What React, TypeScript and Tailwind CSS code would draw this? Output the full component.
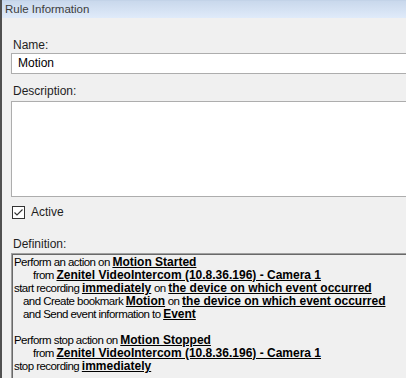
import React from 'react'

const ui = { fontFamily: '"Liberation Sans", Arial, sans-serif' }

function B({ children }: { children: React.ReactNode }) {
  return <span className="font-bold text-[12px] tracking-normal underline underline-offset-[1px]">{children}</span>
}

const lines: React.ReactNode[] = [
  <>Perform an action on <B>Motion Started</B></>,
  <span className="pl-[19px]">from <B>Zenitel VideoIntercom (10.8.36.196) - Camera 1</B></span>,
  <>start recording <B>immediately</B> on <B>the device on which event occurred</B></>,
  <span className="pl-[9px]">and Create bookmark <B>Motion</B> on <B>the device on which event occurred</B></span>,
  <span className="pl-[9px]">and Send event information to <B>Event</B></span>,
  <>&nbsp;</>,
  <>Perform stop action on <B>Motion Stopped</B></>,
  <span className="pl-[19px]">from <B>Zenitel VideoIntercom (10.8.36.196) - Camera 1</B></span>,
  <>stop recording <B>immediately</B></>,
]

export default function App() {
  return (
    <div className="w-[406px] h-[378px] overflow-hidden bg-[#f0f0f0] border-l-2 border-[#505050] flex flex-col text-[#1e1e1e]" style={ui}>
      <div className="h-[18px] shrink-0 border-t border-[#c3d3e8] bg-gradient-to-b from-[#c9d8ec] to-[#e0ebfa] pl-[3px] text-[11.5px] leading-[16px] text-[#3c3c3c]">
        Rule Information
      </div>

      <div className="flex flex-col pl-[9px]">
        <div className="mt-[20px] h-[15px] leading-[15px] text-[12px] pl-[2px]">Name:</div>
        <div className="h-[21px] bg-white border border-r-0 border-[#adadad] pl-[6px] text-[12px] leading-[19px] text-black">
          Motion
        </div>

        <div className="mt-[10px] h-[15px] leading-[15px] text-[12px] pl-[2px]">Description:</div>
        <div className="mt-[2px] h-[96px] bg-white border border-r-0 border-[#adadad]" />

        <div className="mt-[9px] h-[13px] flex items-center gap-[6px] pl-[1px]">
          <span className="w-[13px] h-[13px] border border-[#333333] bg-white flex items-center justify-center">
            <svg width="11" height="11" viewBox="0 0 11 11">
              <path d="M1.5 5.5 L4 8 L9.5 2.5" fill="none" stroke="#333333" strokeWidth="1.1" />
            </svg>
          </span>
          <span className="text-[12px] leading-[13px]">Active</span>
        </div>

        <div className="mt-[18px] h-[15px] leading-[15px] text-[12px] pl-[2px]">Definition:</div>
        <div className="mt-[1px] border-t border-l border-[#a0a0a0] h-[140px]">
          <div className="border-t border-l border-[#696969] h-full pt-[1px] pl-[1px] text-[11.5px] leading-[13px] tracking-[-0.55px] text-black whitespace-nowrap">
            {lines.map((l, i) => (
              <div key={i} className="h-[13px]">{l}</div>
            ))}
          </div>
        </div>
      </div>
    </div>
  )
}
